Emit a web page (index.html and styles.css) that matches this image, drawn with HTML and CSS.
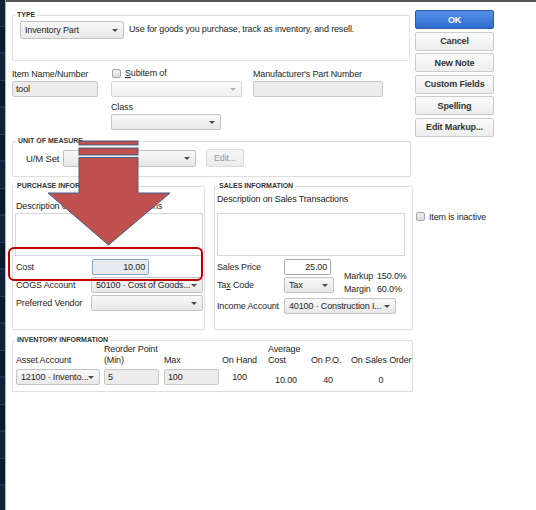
FILE: index.html
```html
<!DOCTYPE html>
<html>
<head>
<meta charset="utf-8">
<link rel="stylesheet" href="styles.css">
</head>
<body>
<div class="window">
  <div class="sidebar"></div>
  <div class="main">
    <div class="form">
      <fieldset class="grp grp-type">
        <legend>TYPE</legend>
        <div class="type-row">
          <div class="select w-type">Inventory Part<span class="caret"></span></div>
          <p class="type-desc">Use for goods you purchase, track as inventory, and resell.</p>
        </div>
      </fieldset>

      <div class="item-grid">
        <div class="lbl">Item Name/Number</div>
        <div class="sub"><span class="check"></span><span><u>S</u>ubitem of</span></div>
        <div class="lbl">Manufacturer's Part Number</div>

        <div class="field w-name">tool</div>
        <div class="select w-subitem"><span></span><span class="caret light"></span></div>
        <div class="field w-mpn"></div>

        <div></div>
        <div class="lbl lbl-class">Class</div>
        <div></div>

        <div></div>
        <div class="select w-class"><span></span><span class="caret"></span></div>
        <div></div>
      </div>

      <fieldset class="grp grp-uom">
        <legend>UNIT OF MEASURE</legend>
        <div class="uom-row">
          <span class="uom-lbl">U/M Set</span>
          <div class="select w-uom"><span></span><span class="caret"></span></div>
          <div class="btn-disabled">Edit...</div>
        </div>
      </fieldset>

      <div class="info-row">
        <fieldset class="grp grp-purchase">
          <legend>PURCHASE INFORMATION</legend>
          <div class="desc-lbl p-desc">Description on Purchase Transactions</div>
          <div class="textarea p-area"></div>
          <div class="rows p-rows">
            <div class="lbl">Cost</div>
            <div class="field cost">10.00</div>
            <div class="lbl">COGS Account</div>
            <div class="select w-cogs">50100 · Cost of Goods...<span class="caret"></span></div>
            <div class="lbl">Preferred Vendor</div>
            <div class="select w-cogs"><span></span><span class="caret"></span></div>
          </div>
        </fieldset>

        <fieldset class="grp grp-sales">
          <legend>SALES INFORMATION</legend>
          <div class="desc-lbl s-desc">Description on Sales Transactions</div>
          <div class="textarea s-area"></div>
          <div class="rows s-rows">
            <div class="lbl">Sales Price</div>
            <div class="field price">25.00</div>
            <div class="lbl">Ta<u>x</u> Code</div>
            <div class="tax-cell">
              <div class="select w-tax">Tax<span class="caret"></span></div>
              <div class="markup">
                <div><span class="mk-l">Markup</span>150.0%</div>
                <div><span class="mk-l">Margin</span>60.0%</div>
              </div>
            </div>
            <div class="lbl lbl-income">Income Account</div>
            <div class="select w-income">40100 · Construction I...<span class="caret"></span></div>
          </div>
        </fieldset>
      </div>

      <fieldset class="grp grp-inv">
        <legend>INVENTORY INFORMATION</legend>
        <div class="inv-grid">
          <div class="ih">Asset Account</div>
          <div class="ih">Reorder Point<br>(Min)</div>
          <div class="ih">Max</div>
          <div class="ih stat">On Hand</div>
          <div class="ih stat-left">Average<br>Cost</div>
          <div class="ih stat">On P.O.</div>
          <div class="ih stat">On Sales Order</div>

          <div class="select w-asset">12100 · Invento...<span class="caret"></span></div>
          <div class="field w-num">5</div>
          <div class="field w-num">100</div>
          <div class="iv iv-hand">100</div>
          <div class="iv iv-avg">10.00</div>
          <div class="iv iv-po">40</div>
          <div class="iv iv-so">0</div>
        </div>
      </fieldset>
    </div>

    <div class="side">
      <div class="btn ok">OK</div>
      <div class="btn">Cancel</div>
      <div class="btn">New Note</div>
      <div class="btn">Custom Fields</div>
      <div class="btn">Spellin<u>g</u></div>
      <div class="btn">Edit Markup...</div>
      <div class="inactive"><span class="check"></span><span>Item is inactive</span></div>
    </div>
  </div>

  <svg class="arrow" width="536" height="510" viewBox="0 0 536 510">
    <rect x="79" y="141" width="59" height="4" fill="#c0504d" stroke="#3e5f8a" stroke-width="1"/>
    <rect x="79" y="148" width="59" height="7" fill="#c0504d" stroke="#3e5f8a" stroke-width="1"/>
    <polygon points="79,157.5 138,157.5 138,193 170,193 108.5,245 48,193 79,193" fill="#c0504d" stroke="#3e5f8a" stroke-width="1" stroke-linejoin="miter"/>
  </svg>
  <div class="highlight"></div>
</div>
</body>
</html>
```

FILE: styles.css
```css
body {
  margin: 0;
  font-family: "Liberation Sans", Arial, sans-serif;
  font-size: 9px;
  letter-spacing: -0.15px;
  color: #262626;
}

.window {
  position: relative;
  width: 536px;
  height: 510px;
  display: flex;
  background: #ffffff;
  overflow: hidden;
}

.sidebar {
  width: 5px;
  flex: none;
  background: repeating-linear-gradient(#0f2239 0px, #0f2239 26px, #24405e 26px, #24405e 27px, #091a2c 27px, #091a2c 52px, #1a3350 52px, #1a3350 54px);
  border-right: 1px solid #a3b6cb;
}

.main {
  flex: 1;
  display: flex;
  gap: 2px;
  border-top: 2px solid #565656;
  padding: 9px 0 0 6px;
}

.form {
  width: 401px;
  flex: none;
}

fieldset.grp {
  margin: 0;
  padding: 0;
  border: 1px solid #dedede;
  border-radius: 2px;
  min-width: 0;
  box-sizing: border-box;
}

fieldset.grp legend {
  font-size: 7px;
  font-weight: bold;
  line-height: 8px;
  letter-spacing: 0;
  padding: 0 2px;
  margin-left: 2px;
  color: #333;
}

/* TYPE */
.grp-type {
  width: 398px;
  padding: 2px 7px 21px 7px !important;
}
.grp-type legend { margin-left: -5px !important; }
.type-row {
  display: flex;
  align-items: flex-start;
  gap: 5px;
}
.type-desc {
  margin: 3px 0 0 0;
  line-height: 10px;
}

/* shared controls */
.select {
  display: flex;
  align-items: center;
  justify-content: space-between;
  height: 16px;
  border: 1px solid #c3c3c3;
  border-radius: 2px;
  background: linear-gradient(#f8f8f8, #e8e8e8);
  padding: 0 5px 0 4px;
  box-sizing: border-box;
  white-space: nowrap;
  overflow: hidden;
}
.caret {
  width: 0;
  height: 0;
  border-left: 3px solid transparent;
  border-right: 3px solid transparent;
  border-top: 3px solid #4a4a4a;
  flex: none;
}
.caret.light { border-top-color: #b0b0b0; }

.field {
  display: flex;
  align-items: center;
  height: 16px;
  border: 1px solid #c8c8c8;
  border-radius: 2px;
  background: #ececec;
  padding: 0 3px;
  box-sizing: border-box;
}

.textarea {
  background: #fff;
  border: 1px solid #d6d6d6;
  box-sizing: border-box;
}

.check {
  display: inline-block;
  width: 9px;
  height: 9px;
  border: 1px solid #a4a4a4;
  border-radius: 2px;
  background: linear-gradient(#f0f0f0, #dcdcdc);
  box-sizing: border-box;
  flex: none;
}

.lbl { line-height: 10px; white-space: nowrap; }

.w-type { width: 104px; height: 18px; }

/* item grid */
.item-grid {
  display: grid;
  grid-template-columns: 99px 142px 130px;
  margin-top: 8px;
}
.sub {
  display: flex;
  align-items: center;
  gap: 4px;
  margin: -1px 0 0 1px;
  height: 10px;
}
.w-name { width: 86px; margin-top: 2px; }
.w-subitem { width: 131px; margin-top: 2px; background: linear-gradient(#fafafa, #f0f0f0); border-color: #d6d6d6; }
.w-mpn { width: 130px; margin-top: 2px; }
.lbl-class { margin-top: 5px; }
.w-class { width: 110px; margin-top: 2px; }

/* UOM */
.grp-uom {
  width: 399px;
  margin-top: 7px !important;
  padding: 4px 0 9px 13px !important;
}
.grp-uom legend { margin-left: -10px !important; }
.uom-row {
  display: flex;
  align-items: center;
  height: 18px;
}
.uom-lbl { width: 37px; font-size: 9.5px; }
.w-uom { width: 133px; height: 17px; }
.btn-disabled {
  margin-left: 10px;
  width: 38px;
  height: 18px;
  border: 1px solid #dcdcdc;
  border-radius: 2px;
  background: linear-gradient(#f6f6f6, #ececec);
  color: #9a9a9a;
  display: flex;
  align-items: center;
  justify-content: center;
  box-sizing: border-box;
}

/* Purchase / Sales */
.info-row {
  display: flex;
  gap: 9px;
  margin-top: 5px;
}
.grp-purchase {
  width: 193px;
  padding: 0 0 18px 3px !important;
}
.grp-purchase legend { margin-left: -1px !important; }
.grp-sales {
  width: 199px;
  padding: 0 0 0 2px !important;
}
.grp-sales legend { margin-left: 0 !important; }
.desc-lbl { line-height: 10px; white-space: nowrap; }
.p-desc { margin-top: 11px; }
.p-area { width: 188px; height: 43px; margin: 2px 0 0 -1px; }
.s-desc { margin-top: 4px; }
.s-area { width: 188px; height: 43px; margin-top: 9px; }

.rows {
  display: grid;
  align-items: center;
  row-gap: 2px;
  margin-top: 3px;
}
.p-rows { grid-template-columns: 75px auto; grid-auto-rows: 16px; }
.cost {
  width: 57px;
  margin-left: 1px;
  justify-content: flex-end;
  background: #e7ebf0;
  border-color: #86a3c8;
}
.w-cogs { width: 112px; }

.s-rows { grid-template-columns: 67px auto; }
.price {
  width: 47px;
  justify-content: flex-end;
  background: #fff;
  border-color: #a9a9a9;
}
.tax-cell {
  display: flex;
  align-items: flex-start;
  height: 16px;
}
.w-tax { width: 50px; }
.markup {
  margin: -7px 0 0 10px;
  line-height: 13px;
  white-space: nowrap;
}
.mk-l { display: inline-block; width: 33px; }
.lbl-income { margin-top: 3px; }
.w-income { width: 112px; margin-top: 3px; }

/* Inventory */
.grp-inv {
  width: 401px;
  margin-top: 6px !important;
  padding: 0 0 6px 3px !important;
}
.grp-inv legend { margin-left: -1px !important; }
.inv-grid {
  display: grid;
  grid-template-columns: 88px 60px 58px 46px 43px 40px 60px;
  align-items: end;
}
.ih {
  line-height: 11px;
  white-space: nowrap;
  justify-self: start;
}
.ih.stat { text-align: center; }
.w-asset { width: 84px; margin-top: 3px; }
.w-num { width: 55px; margin-top: 3px; }
.iv { align-self: start; line-height: 10px; }
.iv-hand { width: 35px; text-align: center; margin-top: 6px; }
.iv-avg { width: 36px; text-align: center; margin-top: 9px; }
.iv-po { width: 34px; text-align: center; margin-top: 9px; }
.iv-so { width: 60px; text-align: center; margin-top: 9px; }

/* right column */
.side {
  width: 79px;
  flex: none;
  margin-top: -1px;
  display: flex;
  flex-direction: column;
  gap: 2.6px;
}
.btn {
  height: 19px;
  border: 1px solid #cbcbcb;
  border-radius: 2px;
  background: linear-gradient(#fbfbfb, #ededed);
  display: flex;
  align-items: center;
  justify-content: center;
  font-weight: bold;
  color: #333;
  box-sizing: border-box;
}
.btn.ok {
  background: linear-gradient(#5490e6, #2f6cd0);
  border-color: #2c5aa8;
  color: #fff;
}
.inactive {
  margin-top: 72px;
  display: flex;
  align-items: center;
  gap: 4px;
  margin-left: 1px;
  line-height: 10px;
}

/* overlays */
.arrow {
  position: absolute;
  left: 0;
  top: 0;
  pointer-events: none;
}
.highlight {
  position: absolute;
  left: 8px;
  top: 247px;
  width: 195px;
  height: 34px;
  border: 2px solid #c00000;
  border-radius: 6px;
  box-sizing: border-box;
  pointer-events: none;
}
```
